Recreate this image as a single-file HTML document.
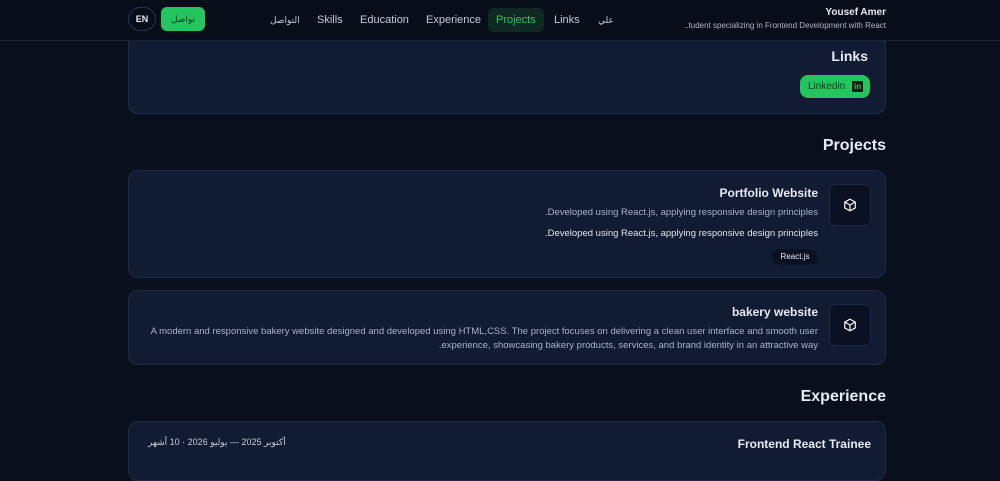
<!DOCTYPE html><html><head><meta charset="utf-8"><style>
*{box-sizing:border-box;margin:0;padding:0}
body{width:1000px;height:457px;overflow:hidden;background:#0a0f1d;font-family:"Liberation Sans","Noto Sans CJK SC",sans-serif;color:#e6ebf5;position:relative}
.abs{position:absolute}
.hdr{left:0;top:0;width:1000px;height:41px;border-bottom:1px solid #1c2538;background:#080d1a;z-index:5}
.top{z-index:6}
.nav{font-size:11px;color:#c5ccd9;top:8px;height:24px;line-height:24px;padding:0 8px;border-radius:5px;z-index:6}
.card{background:#111b31;border:1px solid #1f2b45;border-radius:10px;left:128px;width:758px}
.r{text-align:right}
.ib{width:42px;height:42px;background:#0a1122;border:1px solid #1f2b45;border-radius:6px;display:flex;align-items:center;justify-content:center}
.h2{font-size:16px;font-weight:bold;right:114px}
</style></head><body>
<div class="abs hdr"></div>
<div class="abs top" style="left:128px;top:7px;width:28px;height:24px;border:1px solid #2a3348;border-radius:12px;font-size:9px;font-weight:bold;text-align:center;line-height:22px">EN</div>
<div class="abs top" style="left:161px;top:7px;width:44px;height:24px;background:#22c55e;border-radius:6px;font-size:9px;color:#06301a;text-align:center;line-height:24px">تواصل</div>
<div class="abs nav" style="left:262px;font-size:9px">التواصل</div>
<div class="abs nav" style="left:309px">Skills</div>
<div class="abs nav" style="left:352px">Education</div>
<div class="abs nav" style="left:418px">Experience</div>
<div class="abs nav" style="left:488px;background:#0f2a22;color:#22c55e">Projects</div>
<div class="abs nav" style="left:546px">Links</div>
<div class="abs nav" style="left:590px;font-size:9px">علي</div>
<div class="abs r top" style="right:114px;top:7px;font-size:10px;font-weight:bold">Yousef Amer</div>
<div class="abs r top" style="right:114px;top:21px;font-size:8px;color:#aeb6c6">..tudent specializing in Frontend Development with React</div>

<div class="abs card" style="top:30px;height:84px"></div>
<div class="abs r" style="right:132px;top:48px;font-size:14px;font-weight:bold">Links</div>
<div class="abs" style="left:800px;top:75px;width:70px;height:23px;background:#22c55e;border-radius:8px;font-size:10px;color:#0b3a1f;line-height:23px;padding-left:8px">Linkedin <span style="display:inline-block;background:#0b1a12;color:#22c55e;font-size:8px;font-weight:bold;width:11px;height:11px;line-height:11px;text-align:center;margin-left:4px;vertical-align:middle">in</span></div>

<div class="abs h2" style="top:137px">Projects</div>
<div class="abs card" style="top:170px;height:108px"></div>
<div class="abs ib" style="left:829px;top:184px"><svg width="14" height="14" viewBox="0 0 24 24" fill="none" stroke="#fff" stroke-width="2"><path d="M12 2l9 5v10l-9 5-9-5V7z M3 7l9 5 9-5 M12 12v10"/></svg></div>
<div class="abs r" style="right:182px;top:186px;font-size:12px;font-weight:bold">Portfolio Website</div>
<div class="abs r" style="right:182px;top:207px;font-size:9.5px;color:#aab4c8">.Developed using React.js, applying responsive design principles</div>
<div class="abs r" style="right:182px;top:228px;font-size:9.5px;color:#e0e6f0">.Developed using React.js, applying responsive design principles</div>
<div class="abs" style="left:772px;top:249px;width:46px;height:16px;background:#0a1122;border-radius:8px;font-size:8px;text-align:center;line-height:16px">React.js</div>

<div class="abs card" style="top:290px;height:75px"></div>
<div class="abs ib" style="left:829px;top:304px"><svg width="14" height="14" viewBox="0 0 24 24" fill="none" stroke="#fff" stroke-width="2"><path d="M12 2l9 5v10l-9 5-9-5V7z M3 7l9 5 9-5 M12 12v10"/></svg></div>
<div class="abs r" style="right:182px;top:305px;font-size:12px;font-weight:bold">bakery website</div>
<div class="abs r" style="right:182px;top:325px;width:680px;font-size:9.5px;line-height:13.5px;color:#aab4c8">A modern and responsive bakery website designed and developed using HTML,CSS. The project focuses on delivering a clean user interface and smooth user<br>.experience, showcasing bakery products, services, and brand identity in an attractive way</div>

<div class="abs h2" style="top:388px">Experience</div>
<div class="abs card" style="top:421px;height:60px"></div>
<div class="abs" style="left:148px;top:437px;font-size:9px;color:#c5ccd9">أكتوبر 2025 — يوليو 2026 · 10 أشهر</div>
<div class="abs r" style="right:129px;top:437px;font-size:12px;font-weight:bold">Frontend React Trainee</div>
</body></html>
